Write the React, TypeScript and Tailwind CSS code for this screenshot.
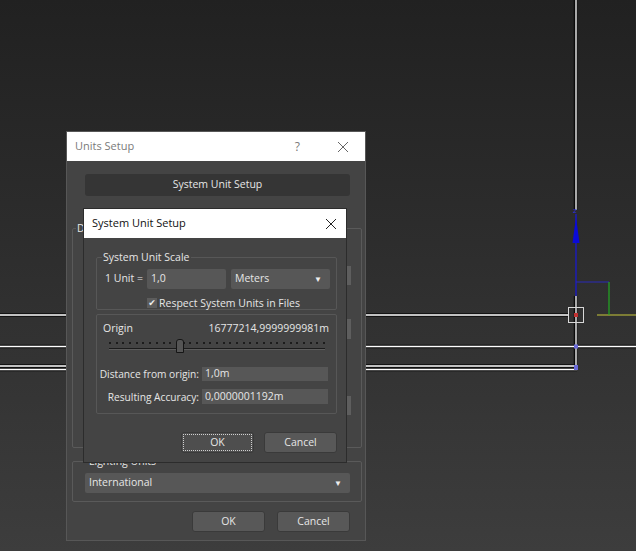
import React from "react";

function CloseIcon({ color }: { color: string }) {
  return (
    <svg width="12" height="12" viewBox="0 0 12 12" fill="none">
      <path d="M1 1L11 11M11 1L1 11" stroke={color} strokeWidth="1" />
    </svg>
  );
}

function Viewport() {
  return (
    <svg className="absolute inset-0" width="636" height="551" viewBox="0 0 636 551">
      {/* grid lines */}
      <g stroke="#0a0a0a" strokeWidth="3.5">
        <line x1="0" y1="315" x2="568" y2="315" />
        <line x1="0" y1="346.5" x2="636" y2="346.5" />
        <line x1="0" y1="366" x2="577" y2="366" />
        <line x1="0" y1="369.5" x2="577" y2="369.5" />
        <line x1="575.5" y1="0" x2="575.5" y2="210" />
        <line x1="575.5" y1="296" x2="575.5" y2="370" />
      </g>
      <g stroke="#ffffff" strokeWidth="1.3">
        <line x1="0" y1="315" x2="568" y2="315" />
        <line x1="0" y1="346.5" x2="636" y2="346.5" />
        <line x1="0" y1="366" x2="577" y2="366" />
        <line x1="0" y1="369.5" x2="577" y2="369.5" />
        <line x1="576" y1="0" x2="576" y2="210" />
        <line x1="576" y1="296" x2="576" y2="370" />
      </g>
      <line x1="597" y1="315" x2="636" y2="315" stroke="#c8c83a" strokeWidth="1.2" />
      {/* gizmo */}
      <line x1="576" y1="214" x2="576" y2="296" stroke="#1a1acc" strokeWidth="1.3" />
      <polygon points="576,217 572.5,243 579.5,243" fill="#0a0ad8" />
      <text x="573" y="213" fontSize="7" fill="#3030e0" fontFamily="DejaVu Sans, sans-serif">z</text>
      <path d="M576 282H609" stroke="#2a2ab8" strokeWidth="1.2" />
      <path d="M609 282V315" stroke="#22aa22" strokeWidth="1.2" />
      <rect x="568.5" y="307.5" width="15" height="15" stroke="#d8d8d8" strokeWidth="1" fill="none" />
      <rect x="574" y="313" width="4" height="4" fill="#c03030" />
      <rect x="574" y="344.5" width="4" height="4" fill="#6a6ad8" />
      <rect x="574" y="365" width="4" height="5" fill="#6a6ad8" />
    </svg>
  );
}

function DarkButton({ children, focused }: { children: React.ReactNode; focused?: boolean }) {
  return (
    <div
      className={
        focused
          ? "flex h-[21px] w-[73px] items-center justify-center rounded-[3px] border border-[#3a3a3a] bg-[#4e4e4e] p-[1px]"
          : "flex h-[21px] w-[73px] items-center justify-center rounded-[3px] border border-[#3a3a3a] bg-[#585858]"
      }
    >
      {focused ? (
        <div className="flex h-full w-full items-center justify-center border border-dotted border-[#d0d0d0] text-[10.5px] text-[#e6e6e6]">
          {children}
        </div>
      ) : (
        <span className="text-[10.5px] text-[#e6e6e6]">{children}</span>
      )}
    </div>
  );
}

function Dropdown({ label, className }: { label: string; className: string }) {
  return (
    <div
      className={
        "flex items-center justify-between rounded-[2px] bg-[#575757] pl-[4px] pr-[8px] text-[10.5px] text-[#e6e6e6] " +
        className
      }
    >
      <span>{label}</span>
      <span className="text-[8px] text-[#eeeeee]">▼</span>
    </div>
  );
}

function UnitsSetup() {
  return (
    <div className="absolute left-[66px] top-[131px] flex h-[410px] w-[300px] flex-col border border-[#575757] bg-[#444444]">
      <div className="flex h-[29px] items-center bg-white pl-[8px] text-[11px] text-[#7a7a7a]">
        <span className="flex-1">Units Setup</span>
        <span className="mr-[37px] text-[12px] text-[#7a7a7a]">?</span>
        <div className="mr-[16px] flex">
          <CloseIcon color="#666666" />
        </div>
      </div>

      <div className="ml-[18px] mr-[15px] mt-[13px] flex h-[22px] items-center justify-center rounded-[3px] bg-[#353535] text-[10.5px] text-[#e6e6e6]">
        System Unit Setup
      </div>

      {/* mostly hidden behind the System Unit Setup window */}
      <fieldset className="ml-[5px] mr-[3px] mt-[26px] flex h-[226px] flex-col items-end rounded-[2px] border border-[#5a5a5a] pr-[10px]">
        <legend className="ml-[3px] px-[1px] text-[10.5px] leading-[12px] text-[#e6e6e6]">Display Unit Scale</legend>
        <div className="mt-[32px] h-[19px] w-[4px] bg-[#5e5e5e]" />
        <div className="mt-[34px] h-[20px] w-[4px] bg-[#5e5e5e]" />
        <div className="mt-[57px] h-[19px] w-[4px] bg-[#5e5e5e]" />
      </fieldset>

      <fieldset className="ml-[5px] mr-[3px] mt-[7px] h-[47px] rounded-[2px] border border-[#5a5a5a] pl-[12px] pr-[11px]">
        <legend className="ml-[3px] px-[1px] text-[10.5px] leading-[12px] text-[#e6e6e6]">Lighting Units</legend>
        <Dropdown label="International" className="mt-[6px] h-[20px] w-full" />
      </fieldset>

      <div className="mr-[15px] mt-[9px] flex justify-end gap-[12px]">
        <DarkButton>OK</DarkButton>
        <DarkButton>Cancel</DarkButton>
      </div>
    </div>
  );
}

function Slider() {
  const dots = Array.from({ length: 33 }, (_, i) => i);
  return (
    <div className="relative ml-[12px] mr-[11px] mt-[5px] h-[14px]">
      <div className="flex justify-between pt-[3px]">
        {dots.map((d) => (
          <span key={d} className="h-[2px] w-[2px] bg-[#1c1c1c]" />
        ))}
      </div>
      <div className="mt-[4px] h-[1px] bg-[#1c1c1c]" />
      <div className="h-[1px] bg-[#5c5c5c]" />
      <div className="absolute left-[67px] top-0 h-[14px] w-[8px] rounded-t-[3px] border border-[#161616] bg-[#555555]" />
    </div>
  );
}

function FieldRow({ label, value, className, inputClass }: { label: string; value: string; className: string; inputClass: string }) {
  return (
    <div className={"flex items-center " + className}>
      <div className="flex w-[102px] shrink-0 justify-end">
        <span className="whitespace-nowrap text-[10.2px] leading-[12px]">{label}</span>
      </div>
      <div className={"ml-[3px] flex w-[126px] items-center bg-[#575757] pl-[3px] text-[10.5px] " + inputClass}>{value}</div>
    </div>
  );
}

function SystemUnitSetup() {
  return (
    <div className="absolute left-[83px] top-[208px] flex h-[255px] w-[264px] flex-col border border-[#2c2c2c] bg-[#444444] text-[#e6e6e6]">
      <div className="flex h-[29px] items-center bg-white pl-[8px] text-[11px] text-[#111111]">
        <span className="flex-1">System Unit Setup</span>
        <div className="mr-[9px] flex">
          <CloseIcon color="#222222" />
        </div>
      </div>

      <fieldset className="ml-[12px] mr-[9px] mt-[13px] h-[59px] rounded-[2px] border border-[#575757]">
        <legend className="ml-[5px] px-[1px] text-[10.5px] leading-[12px]">System Unit Scale</legend>
        <div className="mt-[6px] flex items-center pl-[8px]">
          <span className="w-[42px] text-[10.5px]">1 Unit =</span>
          <div className="flex h-[20px] w-[79px] items-center rounded-[2px] bg-[#575757] pl-[4px] text-[10.5px]">1,0</div>
          <Dropdown label="Meters" className="ml-[5px] h-[20px] w-[99px]" />
        </div>
        <div className="ml-[50px] mt-[8px] flex items-center gap-[2px]">
          <div className="flex h-[10px] w-[10px] items-center justify-center bg-[#5c5c5c] font-['DejaVu_Sans',sans-serif] text-[9px] leading-none text-[#f0f0f0]">
            ✔
          </div>
          <span className="text-[10.5px] leading-[12px]">Respect System Units in Files</span>
        </div>
      </fieldset>

      <div className="ml-[12px] mr-[9px] mt-[4px] h-[100px] rounded-[2px] border border-[#575757]">
        <div className="mt-[7px] flex h-[12px] items-center justify-between pl-[6px] pr-[7px] text-[10.5px] leading-[12px]">
          <span>Origin</span>
          <span>16777214,9999999981m</span>
        </div>
        <Slider />
        <FieldRow label="Distance from origin:" value="1,0m" className="mt-[14px]" inputClass="h-[14px]" />
        <FieldRow label="Resulting Accuracy:" value="0,0000001192m" className="mt-[8px]" inputClass="h-[15px]" />
      </div>

      <div className="mr-[9px] mt-[18px] flex justify-end gap-[10px]">
        <DarkButton focused>OK</DarkButton>
        <DarkButton>Cancel</DarkButton>
      </div>
    </div>
  );
}

export default function App() {
  return (
    <div className="relative h-[551px] w-[636px] overflow-hidden bg-linear-to-b from-[#212121] to-[#3d3d3d] font-['Open_Sans',sans-serif]">
      <Viewport />
      <UnitsSetup />
      <SystemUnitSetup />
    </div>
  );
}
